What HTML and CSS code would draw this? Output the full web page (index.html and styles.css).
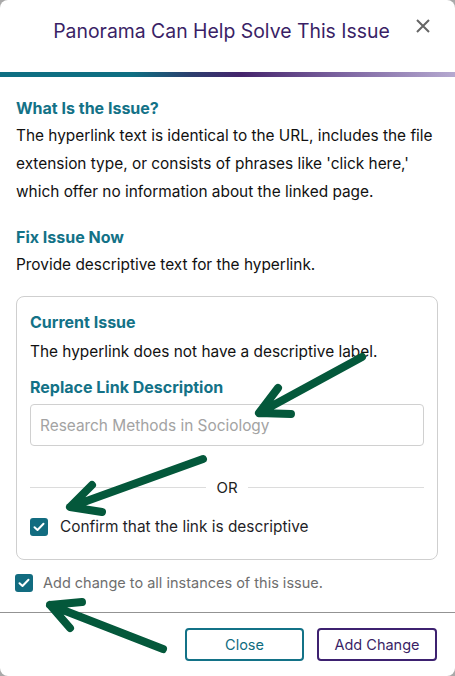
FILE: index.html
```html
<!DOCTYPE html>
<html lang="en">
<head>
<meta charset="utf-8">
<title>Panorama Can Help Solve This Issue</title>
<link rel="stylesheet" href="styles.css">
</head>
<body>
<div class="modal">
  <header class="modal-header">
    <h1 class="modal-title">Panorama Can Help Solve This Issue</h1>
    <button class="close-x" aria-label="Close">
      <svg width="14" height="14" viewBox="0 0 14 14"><path d="M1 1L13 13M13 1L1 13" stroke="#666" stroke-width="2" fill="none"/></svg>
    </button>
  </header>
  <div class="gradient-bar"></div>
  <main class="modal-body">
    <h2 class="section-title">What Is the Issue?</h2>
    <p class="text">The hyperlink text is identical to the URL, includes the file extension type, or consists of phrases like 'click here,' which offer no information about the linked page.</p>
    <h2 class="section-title gap-top">Fix Issue Now</h2>
    <p class="text">Provide descriptive text for the hyperlink.</p>
    <section class="fix-box">
      <h3 class="section-title">Current Issue</h3>
      <p class="text issue-text">The hyperlink does not have a descriptive label.</p>
      <label class="section-title replace-label" for="desc">Replace Link Description</label>
      <input id="desc" class="desc-input" type="text" placeholder="Research Methods in Sociology">
      <div class="or-divider"><span class="or-line"></span><span class="or-text">OR</span><span class="or-line"></span></div>
      <div class="check-row box-check">
        <span class="checkbox"><svg width="12" height="10" viewBox="0 0 12 10"><path d="M1.5 5.2L4.5 8L10.5 1.8" stroke="#fff" stroke-width="2" fill="none" stroke-linecap="round" stroke-linejoin="round"/></svg></span>
        <span class="check-label">Confirm that the link is descriptive</span>
      </div>
    </section>
    <div class="check-row all-row">
      <span class="checkbox"><svg width="12" height="10" viewBox="0 0 12 10"><path d="M1.5 5.2L4.5 8L10.5 1.8" stroke="#fff" stroke-width="2" fill="none" stroke-linecap="round" stroke-linejoin="round"/></svg></span>
      <span class="check-label muted">Add change to all instances of this issue.</span>
    </div>
  </main>
  <footer class="modal-footer">
    <button class="btn btn-close">Close</button>
    <button class="btn btn-add">Add Change</button>
  </footer>
  <svg class="arrows" width="455" height="676" viewBox="0 0 455 676">
    <g stroke="#04583b" stroke-width="8" fill="none" stroke-linecap="round" stroke-linejoin="round">
      <path d="M362 357L259 413M278 388L259 413L291 414"/>
      <path d="M203 459L70 507M92 485L70 507L102 512"/>
      <path d="M163 649L50 605M82 602L50 605L70 628"/>
    </g>
  </svg>
</div>
</body>
</html>
```
FILE: styles.css
```css
* { box-sizing: border-box; }
html, body { margin: 0; padding: 0; }
body {
  background: #a9a9a9;
  font-family: Inter, "Noto Sans", "Liberation Sans", sans-serif;
  color: #111;
}
.modal {
  position: relative;
  width: 455px;
  height: 676px;
  background: #fff;
  border-radius: 8px;
  overflow: hidden;
  display: flex;
  flex-direction: column;
}
.modal-header {
  height: 72px;
  display: flex;
  justify-content: center;
  padding-top: 18px;
  position: relative;
}
.modal-title {
  margin: 0;
  font-size: 19.4px;
  font-weight: 400;
  line-height: 26px;
  color: #3a1f66;
  padding-right: 12px;
}
.close-x {
  position: absolute;
  top: 18px;
  right: 24px;
  border: 0;
  background: none;
  padding: 0;
  width: 16px;
  height: 16px;
  display: flex;
  align-items: center;
  justify-content: center;
}
.gradient-bar {
  height: 5px;
  background: linear-gradient(90deg, #0e6f82 0%, #0e6f82 29%, #2c3e6e 42%, #45246c 53%, #7c64a0 75%, #b5a9d0 100%);
}
.modal-body {
  padding: 17px 17px 0 16px;
  flex: 1;
}
.section-title {
  display: block;
  margin: 0;
  font-size: 16px;
  line-height: 28px;
  font-weight: 700;
  color: #137287;
}
.gap-top { margin-top: 17px; }
.text {
  margin: 0;
  font-size: 15.4px;
  line-height: 28px;
  color: #111;
}
.fix-box {
  margin-top: 17px;
  border: 1px solid #cfcfcf;
  border-radius: 8px;
  padding: 11px 13px 23px 13px;
}
.issue-text { margin-top: 2px; }
.replace-label { margin-top: 7px; }
.desc-input {
  display: block;
  width: 100%;
  height: 42px;
  margin-top: 3px;
  border: 1px solid #d0d0d0;
  border-radius: 4px;
  padding: 0 9px;
  font-family: inherit;
  font-size: 15.4px;
  color: #333;
}
.desc-input::placeholder { color: #a3a3a3; }
.or-divider {
  margin-top: 31px;
  height: 20px;
  display: flex;
  align-items: center;
  gap: 10px;
}
.or-line { flex: 1; height: 1px; background: #dcdcdc; }
.or-text { font-size: 15px; color: #222; }
.check-row {
  display: flex;
  align-items: center;
  gap: 12px;
}
.box-check { margin-top: 21px; }
.checkbox {
  width: 18px;
  height: 18px;
  border-radius: 3px;
  background: #126c80;
  display: flex;
  align-items: center;
  justify-content: center;
  flex: none;
}
.check-label { font-size: 15.4px; line-height: 18px; color: #1f1f28; }
.all-row { margin-top: 14px; margin-left: -1px; gap: 10px; }
.muted { color: #6e6e6e; font-size: 14.5px; }
.modal-footer {
  border-top: 1px solid #939393;
  height: 64px;
  display: flex;
  justify-content: flex-end;
  align-items: flex-start;
  gap: 13px;
  padding: 15px 18px 0 0;
}
.btn {
  height: 33px;
  width: 120px;
  background: #fff;
  border-radius: 4px;
  border: 2px solid;
  font-family: inherit;
  font-size: 14.5px;
}
.btn-close { width: 119px; color: #0f6c80; border-color: #137287; }
.btn-add { color: #3a1f66; border-color: #3d2170; }
.arrows {
  position: absolute;
  left: 0;
  top: 0;
  pointer-events: none;
}
```
